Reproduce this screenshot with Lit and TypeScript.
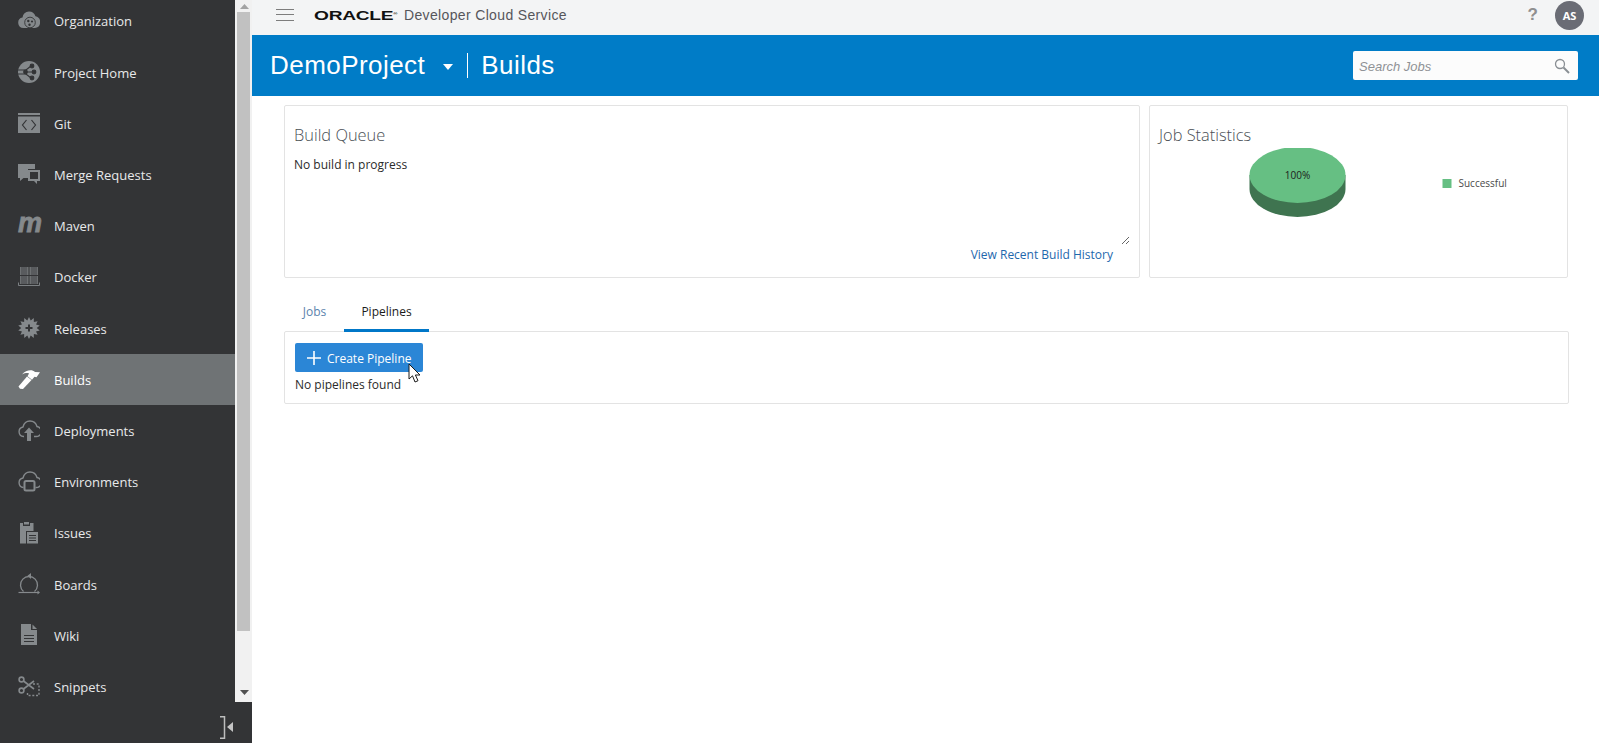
import { LitElement, html, css, svg } from "lit";
import { customElement } from "lit/decorators.js";

function starburst(cx: number, cy: number, outer: number, inner: number, n: number): string {
  const pts: string[] = [];
  for (let i = 0; i < n * 2; i++) {
    const r = i % 2 ? inner : outer;
    const a = (Math.PI * i) / n - Math.PI / 2;
    pts.push(`${(cx + r * Math.cos(a)).toFixed(2)},${(cy + r * Math.sin(a)).toFixed(2)}`);
  }
  return pts.join(" ");
}

const icons: Record<string, unknown> = {
  org: svg`<path d="M5.500 18a5.300 5.300 0 0 1-1-10.500A7 7 0 0 1 11 1.500c3.200 0 5.500 1.800 6.500 4.700A6 6 0 0 1 17 18z"/><circle cx="12" cy="12.500" r="5.300" fill="none" stroke="#333436" stroke-width=".9"/><circle cx="10.300" cy="11" r="1.200" fill="#333436"/><circle cx="14" cy="11.500" r="1.100" fill="#333436"/><circle cx="11.500" cy="14.800" r="1.200" fill="#333436"/>`,
  home: svg`<path fill-rule="evenodd" d="M11 0a11 11 0 1 1 0 22a11 11 0 0 1 0-22z"/><g stroke="#333436" stroke-width="1.200" fill="#333436"><path d="M0 9h8l5-4M0 13h8l5 4M8 11h7" fill="none"/><circle cx="14" cy="5" r="1.800"/><circle cx="16" cy="11" r="1.800"/><circle cx="14" cy="17" r="1.800"/><circle cx="7.500" cy="11" r="1.800"/></g>`,
  git: svg`<path d="M0 0h22v2H0z"/><path d="M0 3.500h22V20H0z"/><path d="M8.500 7 4.500 12l4 5M13.500 7l4 5-4 5" fill="none" stroke="#333436" stroke-width="1.200"/>`,
  merge: svg`<path d="M0 0h17v5H10v9H5.500L2 17v-3H0z"/><path fill-rule="evenodd" d="M10 6h12v11h-3v3l-3-3h-6zm2 2v7h8V8z"/>`,
  docker: svg`<path d="M2 1h8.500v8H2zM11.500 1H20v8h-8.500zM2 10h8.500v8H2zM11.500 10H20v8h-8.500z" fill="#6e7173"/><path d="M4 1v17M6 1v17M8 1v17M14 1v17M16 1v17M18 1v17" stroke="#333436" stroke-width=".7" fill="none"/><path d="M.5 16.500v3h21v-3" fill="none" stroke="#85898c" stroke-width=".9"/>`,
  rel: svg`<polygon points="${starburst(11, 11, 11, 7.800, 14)}"/><path d="M10 7.500h2V10h2.500v2H12v2.500h-2V12H7.500v-2H10z" fill="#333436"/>`,
  build: svg`<path d="M.5 17.500 9 7.500l4.500 3.500L5 20l-3-.2z"/><path d="M4 5.500C8 1 14 .2 17 3l5 .2-3.500 5-2-.5-2.500 3-4.500-3.500 1.500-2.700C9.500 3.800 7 4 4 5.500z"/>`,
  deploy: svg`<path fill="none" stroke="#85898c" stroke-width="1.400" d="M6 16.500H5.500a4.800 4.800 0 0 1-.5-9.500C6 3 9 1 12 1c3.500 0 6 2 7 5.500a5 5 0 0 1-1.500 10H16"/><path d="M11 7.500l5 5.500h-3v8h-4v-8H6z"/>`,
  env: svg`<path fill="none" stroke="#85898c" stroke-width="1.400" d="M5.500 16.500a4.800 4.800 0 0 1-.5-9.500C6 3 9 1 12 1c3.500 0 6 2 7 5.500a5 5 0 0 1-1.500 10"/><rect x="6.500" y="10" width="10" height="9.500" rx="1.500" fill="none" stroke="#85898c" stroke-width="2"/>`,
  issues: svg`<path d="M2 1h3v3h7V1h3.500v8H8v12.500H2z"/><path d="M6 0h5v2.500H6z"/><path fill-rule="evenodd" d="M9 10h11v11.500H9zm2 3v1h7v-1zm0 2.500v1h7v-1zm0 2.500v1h7v-1z"/>`,
  boards: svg`<path fill="none" stroke="#85898c" stroke-width="1.300" d="M5.500 18.500a8.500 8.500 0 1 1 11 0"/><path d="M9.500 2.800 13 0v6z"/><path fill="none" stroke="#85898c" stroke-width="1.200" d="M.5 19.500h20"/><path d="M19.500 17.500l2.500 2-2.500 2z"/>`,
  wiki: svg`<path fill-rule="evenodd" d="M3 0h10v6h6v15H3zM6 11v1h10v-1zm0 3v1h10v-1zm0 3v1h10v-1z"/><path d="M14.500.5l4.500 4.500h-4.500z"/>`,
  snip: svg`<g fill="none" stroke="#85898c" stroke-width="1.600"><circle cx="3.500" cy="3.500" r="2.400"/><circle cx="3.500" cy="14.500" r="2.400"/><path d="M5.500 5 16 13M5.500 13 16 5"/></g><path fill="none" stroke="#85898c" stroke-width="1.400" stroke-dasharray="2 1.700" d="M15 8h6v11.500H9.500V16"/>`,
};

const items: [string, string][] = [
  ["Organization", "org"], ["Project Home", "home"], ["Git", "git"], ["Merge Requests", "merge"],
  ["Maven", "m"], ["Docker", "docker"], ["Releases", "rel"], ["Builds", "build"],
  ["Deployments", "deploy"], ["Environments", "env"], ["Issues", "issues"], ["Boards", "boards"],
  ["Wiki", "wiki"], ["Snippets", "snip"],
];

@customElement("app-root")
export class AppRoot extends LitElement {
  static styles = css`
    :host { display: flex; height: 743px; width: 1599px; overflow: hidden; background: #fff;
      font-family: "Open Sans", "Noto Sans", sans-serif; font-size: 12px; color: #2b2b2b; }
    * { box-sizing: border-box; }
    .side { width: 252px; flex: none; background: #333436; display: flex; flex-direction: column; }
    .side-top { height: 702px; display: flex; flex: none; }
    .nav { width: 235px; flex: none; overflow: hidden; }
    .nav-inner { margin-top: -4.4px; }
    .row { height: 51.2px; display: flex; align-items: center; gap: 14px; padding-left: 18px; color: #e8e9ea; font-size: 13px; }
    .row span:last-child { padding-top: .5px; }
    .row.on { background: #6f7375; color: #fff; }
    .ico { width: 22px; height: 22px; flex: none; fill: #85898c; }
    .row.on .ico { fill: #fff; }
    .m { width: 22px; flex: none; font: italic 900 27px/22px "Liberation Sans", sans-serif; color: #85898c;
      -webkit-text-stroke: .8px #85898c; text-align: center; letter-spacing: -1px; margin-top: -6px; }
    .sb { width: 17px; flex: none; background: #f1f1f1; display: flex; flex-direction: column; align-items: center; padding-left: 1px; }
    .arrow { height: 12px; display: flex; align-items: center; flex: none; }
    .arrow svg { display: block; fill: #a3a3a3; }
    .arrow.dn { height: 20px; }
    .arrow.dn svg { fill: #505050; }
    .thumb { width: 13px; height: 619px; background: #c1c1c1; flex: none; margin-right: 1px; }
    .sb-fill { flex: 1; }
    .side-foot { flex: 1; display: flex; justify-content: flex-end; align-items: center; padding: 9px 18px 0 0; }
    .side-foot svg { display: block; }
    .main { flex: 1; min-width: 0; display: flex; flex-direction: column; }
    .top { height: 35px; background: #f3f4f5; display: flex; align-items: center; padding: 0 15px 5px 24px; flex: none; }
    .burger { width: 18px; height: 12px; border-top: 1.5px solid #7d7d7d; border-bottom: 1.5px solid #7d7d7d; margin-right: 20px; flex: none; }
    .burger::after { content: ""; display: block; margin-top: 3.75px; height: 1.5px; background: #7d7d7d; }
    .logo { font: 700 13.5px/14px "Liberation Sans", sans-serif; color: #111; display: inline-block; transform: scale(1.42, 1); transform-origin: left center; width: 83px; letter-spacing: -.2px; white-space: nowrap; }
    .reg { font-size: 4px; vertical-align: 5px; }
    .svc { font: 14px "Liberation Sans", sans-serif; letter-spacing: .35px; color: #56565b; margin-left: 7px; }
    .help { margin-left: auto; font: 700 17px "Liberation Sans", sans-serif; color: #8f8f8f; margin-right: 17px; }
    .avatar { width: 29px; height: 29px; border-radius: 50%; background: #6a6c75; color: #fff; font: 700 11px/29px "Open Sans", sans-serif; text-align: center; }
    .bar { height: 61px; background: #007cc7; color: #fff; display: flex; align-items: center; padding: 0 21px 0 18px; flex: none; font: 26px "Liberation Sans", sans-serif; letter-spacing: .45px; }
    .caret { width: 0; height: 0; border: 5.5px solid transparent; border-top: 6px solid #fff; border-bottom: 0; margin: 2px 14px 0 18px; }
    .sep { width: 1px; height: 25px; background: #fff; margin-right: 13px; }
    .search { margin-left: auto; width: 225px; height: 29px; background: #fcfcfc; border-radius: 2px; display: flex; align-items: center; justify-content: space-between; padding: 1px 8px 0 6px; font: italic 13px "Liberation Sans", sans-serif; letter-spacing: 0; color: #8f9296; }
    .content { padding: 9px 31px 0 32px; flex: 1; }
    .cards { display: flex; gap: 9px; height: 173px; }
    .card { background: #fff; border: 1px solid #e3e3e3; border-radius: 2px; }
    .q { width: 856px; padding: 16px 0 0 9px; }
    .js { flex: 1; padding-top: 16px; }
    h2 { margin: 0; font: 300 16.4px/26px "Open Sans", sans-serif; color: #4a4f55; height: 26px; }
    .js h2 { padding-left: 9px; }
    .log { height: 97px; width: 836px; resize: vertical; overflow: auto; line-height: 20px; padding-top: 7px; }
    .hist { text-align: right; padding-right: 26px; color: #1e68ad; line-height: 20px; }
    .chart { display: block; width: 100%; height: 120px; }
    .chart text { font-family: "Open Sans", sans-serif; }
    .tabs { display: flex; height: 37px; margin-top: 17px; padding-left: 1px; position: relative; z-index: 1; margin-bottom: -1px; }
    .tab { display: flex; align-items: center; justify-content: center; height: 37px; padding-bottom: 4px; color: #5b84ad; }
    .tab.jobs { width: 59px; }
    .tab.pipe { width: 85px; color: #1b1b1b; border-bottom: 3px solid #0077c8; padding-bottom: 1px; }
    .panel { border: 1px solid #e3e3e3; border-radius: 2px; height: 73px; padding: 11px 10px; margin-right: -1px; }
    .btn { position: relative; width: 128px; height: 29px; background: #2b86d6; border-radius: 2px; color: #fff; display: flex; align-items: center; padding-left: 12px; gap: 6px; font-size: 12px; white-space: nowrap; }
    .btn span { padding-top: 1px; }
    .btn svg.plus { display: block; flex: none; }
    .cursor { position: absolute; left: 113px; top: 20px; }
    .none { line-height: 20px; margin-top: 3px; }
  `;

  render() {
    return html`
      <aside class="side">
        <div class="side-top">
          <nav class="nav"><div class="nav-inner">
            ${items.map(([t, k]) => html`
              <div class="row ${t === "Builds" ? "on" : ""}">
                ${k === "m" ? html`<span class="m">m</span>` : html`<svg class="ico" viewBox="0 0 22 22">${icons[k]}</svg>`}
                <span>${t}</span>
              </div>`)}
          </div></nav>
          <div class="sb">
            <div class="arrow"><svg width="9" height="5" viewBox="0 0 9 5"><path d="M4.500 0 9 5H0z"/></svg></div>
            <div class="thumb"></div>
            <div class="sb-fill"></div>
            <div class="arrow dn"><svg width="9" height="5" viewBox="0 0 9 5"><path d="M0 0h9L4.500 5z"/></svg></div>
          </div>
        </div>
        <div class="side-foot">
          <svg width="15" height="23" viewBox="0 0 15 23"><path d="M1 .8h4.500v21.400H1" fill="none" stroke="#bdbdbd" stroke-width="1.500"/><path d="M14 6v10L8 11z" fill="#c4c4c4"/></svg>
        </div>
      </aside>
      <div class="main">
        <header class="top">
          <div class="burger"></div>
          <span class="logo">ORACLE<span class="reg">®</span></span>
          <span class="svc">Developer Cloud Service</span>
          <span class="help">?</span>
          <div class="avatar">AS</div>
        </header>
        <div class="bar">
          <span>DemoProject</span><span class="caret"></span><span class="sep"></span><span>Builds</span>
          <div class="search"><span>Search Jobs</span>
            <svg width="16" height="16" viewBox="0 0 16 16" fill="none" stroke="#8a8f94"><circle cx="6" cy="6" r="4.500" stroke-width="1.300"/><path d="M9.500 9.500 15 15" stroke-width="2"/></svg>
          </div>
        </div>
        <main class="content">
          <div class="cards">
            <section class="card q">
              <h2>Build Queue</h2>
              <div class="log">No build in progress</div>
              <div class="hist">View Recent Build History</div>
            </section>
            <section class="card js">
              <h2>Job Statistics</h2>
              <svg class="chart" viewBox="0 0 416 120">
                <path d="M99 27v14a48 28 0 0 0 96 0V27z" fill="#3f7450"/>
                <ellipse cx="147" cy="27" rx="48" ry="28" fill="#66bf83"/>
                <text x="147" y="31" font-size="10" text-anchor="middle" fill="#1c1c1c">100%</text>
                <rect x="292" y="31" width="9" height="9" fill="#66bf83"/>
                <text x="308" y="39" font-size="10" fill="#4a4a4a">Successful</text>
              </svg>
            </section>
          </div>
          <div class="tabs"><div class="tab jobs">Jobs</div><div class="tab pipe">Pipelines</div></div>
          <section class="panel">
            <div class="btn">
              <svg class="plus" width="14" height="14" viewBox="0 0 14 14"><path d="M6.200 0h1.600v6.200H14v1.600H7.800V14H6.200V7.800H0V6.200h6.200z" fill="#fff"/></svg>
              <span>Create Pipeline</span>
              <svg class="cursor" width="14" height="20" viewBox="0 0 14 20"><path d="M1 1v15l3.500-3.200L7 19l3-1.300-2.600-5.700H12z" fill="#fff" stroke="#1a1a1a" stroke-width="1"/></svg>
            </div>
            <div class="none">No pipelines found</div>
          </section>
        </main>
      </div>
    `;
  }
}
